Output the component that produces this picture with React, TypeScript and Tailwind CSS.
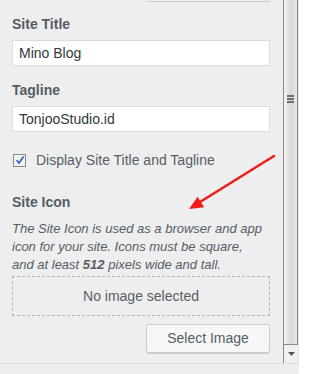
import React from 'react';

const App = () => {
  return (
    <div className="relative w-[317px] h-[374px] overflow-hidden bg-white font-['Liberation_Sans',Arial,sans-serif]">
      <div className="flex h-[363px]">
        {/* Panel */}
        <div className="w-[283px] bg-[#eeeeee] pl-[12px] pr-[13px]">
          <div className="ml-[135px] h-[2px] border-b border-[#c8c8c8]" />

          <div className="mt-[12px] text-[14px] leading-[20px] font-bold text-[#555d66]">Site Title</div>
          <div className="mt-[6px] h-[26px] bg-white border border-[#dddddd] px-[6px] text-[14px] leading-[24px] text-[#32373c]">
            Mino Blog
          </div>

          <div className="mt-[14px] text-[14px] leading-[20px] font-bold text-[#555d66]">Tagline</div>
          <div className="mt-[6px] h-[26px] bg-white border border-[#dddddd] px-[6px] text-[14px] leading-[24px] text-[#32373c]">
            TonjooStudio.id
          </div>

          <div className="mt-[20px] flex items-center h-[16px] pl-[1px]">
            <div className="w-[13px] h-[13px] border border-[#8a8a8a] bg-[#f2f2f2] flex items-center justify-center">
              <svg width="10" height="10" viewBox="0 0 10 10">
                <path d="M1.5 5.2 L4 8 L8.6 1.4" fill="none" stroke="#2f5fbf" strokeWidth="1.7" />
              </svg>
            </div>
            <span className="ml-[10px] text-[14px] text-[#555d66]">Display Site Title and Tagline</span>
          </div>

          <div className="mt-[24px] text-[14px] leading-[20px] font-bold text-[#555d66]">Site Icon</div>
          <p className="mt-[8px] pr-[6px] text-[13px] leading-[18px] italic text-[#555d66]">
            The Site Icon is used as a browser and app icon for your site. Icons must be square, and at least{' '}
            <strong>512</strong> pixels wide and tall.
          </p>

          <div className="mt-[2px] h-[40px] border border-dashed border-[#b4b4b4] flex items-center justify-center text-[14px] text-[#555d66]">
            No image selected
          </div>

          <div className="mt-[8px] flex justify-end">
            <button className="w-[124px] h-[29px] rounded-[3px] border border-[#cccccc] bg-[#f7f7f7] shadow-[0_1px_0_#cccccc] text-[14px] text-[#555d66]">
              Select Image
            </button>
          </div>
        </div>

        {/* Scrollbar */}
        <div className="w-[15px] flex flex-col bg-[#f0f0f0] border-l border-[#8a8a8a]">
          <div className="h-[345px] border-r border-b border-[#8a8a8a] bg-gradient-to-r from-[#f4f4f4] via-[#d9d9d9] to-[#e6e6e6] flex flex-col items-center pt-[95px]">
            <div className="flex flex-col gap-[1px]">
              <div className="w-[7px] h-[2px] bg-[#6e6e6e]" />
              <div className="w-[7px] h-[2px] bg-[#6e6e6e]" />
              <div className="w-[7px] h-[2px] bg-[#6e6e6e]" />
            </div>
          </div>
          <div className="flex-1 flex items-center justify-center">
            <svg width="7" height="4" viewBox="0 0 7 4">
              <path d="M0 0 H7 L3.5 4 Z" fill="#555" />
            </svg>
          </div>
        </div>
        <div className="w-[1px] bg-[#e4e4e4]" />
        <div className="flex-1 bg-white" />
      </div>

      <div className="flex h-[11px]">
        <div className="w-[299px] border-t border-[#dcdcdc] bg-[#eeeeee]" />
        <div className="flex-1 bg-white" />
      </div>

      {/* Red annotation arrow */}
      <svg className="absolute left-0 top-0 pointer-events-none" width="317" height="374" viewBox="0 0 317 374">
        <line x1="274" y1="156" x2="200" y2="202" stroke="#ee1c1c" strokeWidth="2.6" strokeLinecap="round" />
        <path d="M189 209 L197.6 196.8 L204.2 207.2 Z" fill="#ee1c1c" />
      </svg>
    </div>
  );
};

export default App;
